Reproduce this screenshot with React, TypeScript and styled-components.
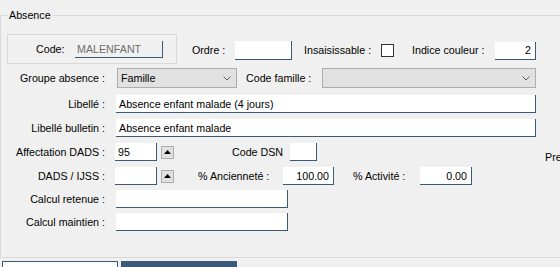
import React from 'react';
import styled, {createGlobalStyle} from 'styled-components';

const GlobalStyle = createGlobalStyle`
  html, body {
    margin: 0;
    padding: 0;
    background-color: #f0f0f0;
    overflow: hidden;
  }

  body {
    font-family: "Liberation Sans", Arial, sans-serif;
    font-size: 10.7px;
    color: #000;
  }
`

const fieldBorder = '#3a5a7a';

export default function App() {
    return <>
        <GlobalStyle/>
        <Page>
            <Group>
                <Legend>Absence</Legend>
                <Form>
                    <Row $h={30}>
                        <CodeBox>
                            <Label $w={39} $align="left">Code:</Label>
                            <Field $w={88} $h={17} $disabled readOnly value="MALENFANT"/>
                        </CodeBox>
                        <TopFields>
                            <Label $w={43} $ml={15} $align="left">Ordre :</Label>
                            <Field $w={57} $h={19} readOnly value=""/>
                            <Label $w={77} $ml={12} $align="left">Insaisissable :</Label>
                            <CheckBox/>
                            <Label $w={83} $ml={18} $align="left">Indice couleur :</Label>
                            <Field $w={41} $h={18} $right readOnly value="2"/>
                        </TopFields>
                    </Row>

                    <Row $h={28}>
                        <Label $w={104}>Groupe absence :</Label>
                        <Select $w={120} $ml={12}>
                            <span>Famille</span>
                            <Chevron/>
                        </Select>
                        <Label $w={76} $ml={9} $align="left">Code famille :</Label>
                        <Select $w={214}>
                            <span/>
                            <Chevron/>
                        </Select>
                    </Row>

                    <Row>
                        <Label $w={104}>Libellé :</Label>
                        <Field $w={420} $ml={11} readOnly value="Absence enfant malade (4 jours)"/>
                    </Row>

                    <Row>
                        <Label $w={104}>Libellé bulletin :</Label>
                        <Field $w={420} $ml={11} readOnly value="Absence enfant malade"/>
                    </Row>

                    <Row>
                        <Label $w={104}>Affectation DADS :</Label>
                        <Field $w={42} $ml={10} readOnly value="95"/>
                        <SpinButton/>
                        <Label $w={58} $ml={58} $align="left">Code DSN</Label>
                        <Field $w={27} readOnly value=""/>
                        <SideLabel>Pre</SideLabel>
                    </Row>

                    <Row>
                        <Label $w={104}>DADS / IJSS :</Label>
                        <Field $w={42} $ml={10} readOnly value=""/>
                        <SpinButton/>
                        <Label $w={85} $ml={24} $align="left">% Ancienneté :</Label>
                        <Field $w={51} $right readOnly value="100.00"/>
                        <Label $w={67} $ml={19} $align="left">% Activité :</Label>
                        <Field $w={52} $right readOnly value="0.00"/>
                    </Row>

                    <Row $h={22}>
                        <Label $w={104}>Calcul retenue :</Label>
                        <Field $w={172} $ml={11} readOnly value=""/>
                    </Row>

                    <Row>
                        <Label $w={104}>Calcul maintien :</Label>
                        <Field $w={172} $ml={11} readOnly value=""/>
                    </Row>
                </Form>
            </Group>
            <Tabs>
                <Tab/>
                <Tab $active/>
            </Tabs>
        </Page>
    </>;
}

function Chevron() {
    return <ChevronIcon width="8" height="5" viewBox="0 0 8 5">
        <path d="M0.5 0.5 L4 4 L7.5 0.5" fill="none" stroke="#606060" strokeWidth="1"/>
    </ChevronIcon>;
}

function SpinButton() {
    return <Spin>
        <svg width="7" height="4" viewBox="0 0 7 4">
            <path d="M0 4 L3.5 0 L7 4 Z" fill="#000"/>
        </svg>
    </Spin>;
}

const Page = styled.div`
  width: 560px;
  height: 267px;
  overflow: hidden;
`

const Group = styled.fieldset`
  box-sizing: border-box;
  margin: 9px 0 0 0;
  padding: 0;
  width: 580px;
  height: 249px;
  border: 1px solid #d9d9d9;
  min-width: 0;
`

const Legend = styled.legend`
  margin-left: 6px;
  padding: 0 2px;
  line-height: 13px;
  font-size: 10.7px;
`

const Form = styled.div`
  display: flex;
  flex-direction: column;
  padding-top: 12px;
`

const Row = styled.div<{ $h?: number }>`
  display: flex;
  align-items: center;
  height: ${p => p.$h ?? 24}px;
`

const CodeBox = styled.div`
  box-sizing: border-box;
  display: flex;
  align-items: center;
  margin-left: 6px;
  padding-left: 28px;
  width: 170px;
  height: 30px;
  border: 1px solid #d9d9d9;
  align-self: flex-start;
`

const TopFields = styled.div`
  display: flex;
  align-items: center;
  align-self: flex-start;
  margin-top: 7px;
  height: 19px;
`

const Label = styled.label<{ $w: number, $ml?: number, $align?: 'left' | 'right' }>`
  flex: none;
  box-sizing: border-box;
  width: ${p => p.$w}px;
  margin-left: ${p => p.$ml ?? 0}px;
  text-align: ${p => p.$align ?? 'right'};
  white-space: nowrap;
  line-height: 13px;
`

const SideLabel = styled.span`
  align-self: flex-end;
  margin-left: 228px;
  line-height: 13px;
  white-space: nowrap;
`

const Field = styled.input<{ $w: number, $h?: number, $ml?: number, $right?: boolean, $disabled?: boolean }>`
  flex: none;
  box-sizing: border-box;
  width: ${p => p.$w}px;
  height: ${p => p.$h ?? 18}px;
  margin: 0 0 0 ${p => p.$ml ?? 0}px;
  padding: 0 ${p => p.$right ? 4 : 2}px 0 ${p => p.$disabled ? 2 : 3}px;
  border: none;
  border-right: 1px solid ${fieldBorder};
  border-bottom: 1px solid ${fieldBorder};
  border-radius: 0;
  outline: none;
  background-color: ${p => p.$disabled ? '#f0f0f0' : '#ffffff'};
  color: ${p => p.$disabled ? '#6d6d6d' : '#000'};
  font-family: "Liberation Sans", Arial, sans-serif;
  font-size: 10.7px;
  text-align: ${p => p.$right ? 'right' : 'left'};
`

const CheckBox = styled.span`
  flex: none;
  box-sizing: border-box;
  width: 13px;
  height: 13px;
  border: 1px solid #333333;
  background-color: #ffffff;
`

const Select = styled.div<{ $w: number, $ml?: number }>`
  flex: none;
  box-sizing: border-box;
  display: flex;
  align-items: center;
  justify-content: space-between;
  width: ${p => p.$w}px;
  height: 20px;
  margin-left: ${p => p.$ml ?? 0}px;
  padding: 0 5px 0 3px;
  background-color: #e1e1e1;
  border: 1px solid #adadad;
  line-height: 13px;
`

const ChevronIcon = styled.svg`
  flex: none;
`

const Spin = styled.div`
  flex: none;
  box-sizing: border-box;
  display: flex;
  align-items: center;
  justify-content: center;
  width: 13px;
  height: 13px;
  margin-left: 4px;
  background-color: #e1e1e1;
  border: 1px solid #adadad;
`

const Tabs = styled.div`
  display: flex;
  gap: 3px;
  margin-top: 3px;
  padding-left: 2px;
`

const Tab = styled.div<{ $active?: boolean }>`
  box-sizing: border-box;
  width: 116px;
  height: 24px;
  border: 1px solid ${fieldBorder};
  background-color: ${p => p.$active ? fieldBorder : '#ffffff'};
`
